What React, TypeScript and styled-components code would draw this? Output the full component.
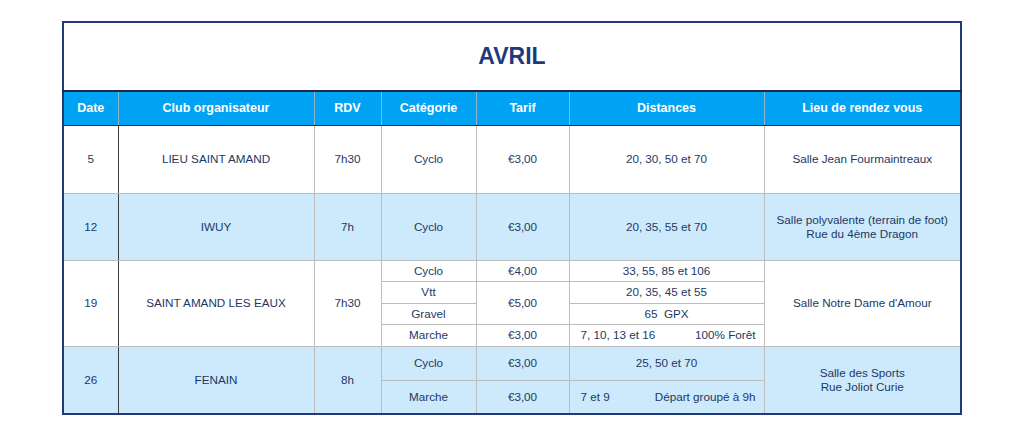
import * as React from 'react';
import styled, { createGlobalStyle } from 'styled-components';

const GlobalStyle = createGlobalStyle`
  body {
    margin: 0;
    background: #ffffff;
    font-family: "Liberation Sans", Arial, sans-serif;
  }
`;

type Sub = { cat: string; tarif?: string; tarifSpan?: number; dist: string; note?: string };

type Day = {
  date: string;
  club: string;
  rdv: string;
  lieu: string[];
  shaded: boolean;
  height: number;
  subs: Sub[];
};

const days: Day[] = [
  {
    date: '5',
    club: 'LIEU SAINT AMAND',
    rdv: '7h30',
    lieu: ['Salle Jean Fourmaintreaux'],
    shaded: false,
    height: 68,
    subs: [{ cat: 'Cyclo', tarif: '€3,00', dist: '20, 30, 50 et 70' }],
  },
  {
    date: '12',
    club: 'IWUY',
    rdv: '7h',
    lieu: ['Salle polyvalente (terrain de foot)', 'Rue du 4ème Dragon'],
    shaded: true,
    height: 67,
    subs: [{ cat: 'Cyclo', tarif: '€3,00', dist: '20, 35, 55 et 70' }],
  },
  {
    date: '19',
    club: 'SAINT AMAND LES EAUX',
    rdv: '7h30',
    lieu: ["Salle Notre Dame d'Amour"],
    shaded: false,
    height: 21.5,
    subs: [
      { cat: 'Cyclo', tarif: '€4,00', dist: '33, 55, 85 et 106' },
      { cat: 'Vtt', tarif: '€5,00', tarifSpan: 2, dist: '20, 35, 45 et 55' },
      { cat: 'Gravel', dist: '65  GPX' },
      { cat: 'Marche', tarif: '€3,00', dist: '7, 10, 13 et 16', note: '100% Forêt' },
    ],
  },
  {
    date: '26',
    club: 'FENAIN',
    rdv: '8h',
    lieu: ['Salle des Sports', 'Rue Joliot Curie'],
    shaded: true,
    height: 34,
    subs: [
      { cat: 'Cyclo', tarif: '€3,00', dist: '25, 50 et 70' },
      { cat: 'Marche', tarif: '€3,00', dist: '7 et 9', note: 'Départ groupé à 9h' },
    ],
  },
];

function App() {
  return (
    <>
      <GlobalStyle />
      <Page>
        <Table>
          <colgroup>
            <col style={{ width: 55 }} />
            <col style={{ width: 196 }} />
            <col style={{ width: 67 }} />
            <col style={{ width: 95 }} />
            <col style={{ width: 93 }} />
            <col style={{ width: 195 }} />
            <col />
          </colgroup>
          <thead>
            <TitleRow>
              <TitleCell colSpan={7}>AVRIL</TitleCell>
            </TitleRow>
            <HeadRow>
              <HeadCell>Date</HeadCell>
              <HeadCell>Club organisateur</HeadCell>
              <HeadCell>RDV</HeadCell>
              <HeadCell>Catégorie</HeadCell>
              <HeadCell>Tarif</HeadCell>
              <HeadCell>Distances</HeadCell>
              <HeadCell>Lieu de rendez vous</HeadCell>
            </HeadRow>
          </thead>
          <tbody>
            {days.map(day =>
              day.subs.map((sub, i) => (
                <BodyRow key={day.date + i} $shaded={day.shaded} $h={day.height}>
                  {i === 0 && (
                    <>
                      <DateCell rowSpan={day.subs.length}>{day.date}</DateCell>
                      <Cell rowSpan={day.subs.length}>{day.club}</Cell>
                      <Cell rowSpan={day.subs.length}>{day.rdv}</Cell>
                    </>
                  )}
                  <Cell>{sub.cat}</Cell>
                  {sub.tarif && <Cell rowSpan={sub.tarifSpan || 1}>{sub.tarif}</Cell>}
                  <Cell>
                    {sub.note ? (
                      <Split>
                        <span>{sub.dist}</span>
                        <span>{sub.note}</span>
                      </Split>
                    ) : (
                      <Pre>{sub.dist}</Pre>
                    )}
                  </Cell>
                  {i === 0 && (
                    <Cell rowSpan={day.subs.length}>
                      {day.lieu.map(line => (
                        <Line key={line}>{line}</Line>
                      ))}
                    </Cell>
                  )}
                </BodyRow>
              ))
            )}
          </tbody>
        </Table>
      </Page>
    </>
  );
}

const Page = styled.div`
  padding-top: 21px;
  display: flex;
  justify-content: center;
`;

const Table = styled.table`
  width: 900px;
  table-layout: fixed;
  border-collapse: collapse;
  border: 2px solid #1f3a78;
  color: #1f3864;
  font-size: 11.7px;
`;

const TitleRow = styled.tr`
  height: 69px;
`;

const TitleCell = styled.th`
  background: #ffffff;
  color: #1f3a7c;
  font-size: 23px;
  font-weight: bold;
  text-align: center;
  padding: 0;
  border-bottom: 2px solid #1c2a48;
`;

const HeadRow = styled.tr`
  height: 34px;
  background: #00a3f3;
`;

const HeadCell = styled.th`
  color: #ffffff;
  font-size: 12.5px;
  font-weight: bold;
  padding: 0;
  border-left: 1px solid #8fb4cc;
  border-bottom: 1px solid #1c2a48;

  &:first-child {
    border-left: none;
  }
`;

const BodyRow = styled.tr<{ $shaded: boolean; $h: number }>`
  height: ${props => props.$h}px;
  background: ${props => (props.$shaded ? '#cceafb' : '#ffffff')};
`;

const Cell = styled.td`
  text-align: center;
  vertical-align: middle;
  padding: 0 8px;
  border: 1px solid #bdbdbd;
  line-height: 14px;
`;

const DateCell = styled(Cell)`
  border-left: none;
  border-right: 1px solid #3a3a3a;
`;

const Split = styled.div`
  display: flex;
  justify-content: space-between;
  padding: 0 0 0 3px;
`;

const Pre = styled.span`
  white-space: pre;
`;

const Line = styled.div``;

export default App;
